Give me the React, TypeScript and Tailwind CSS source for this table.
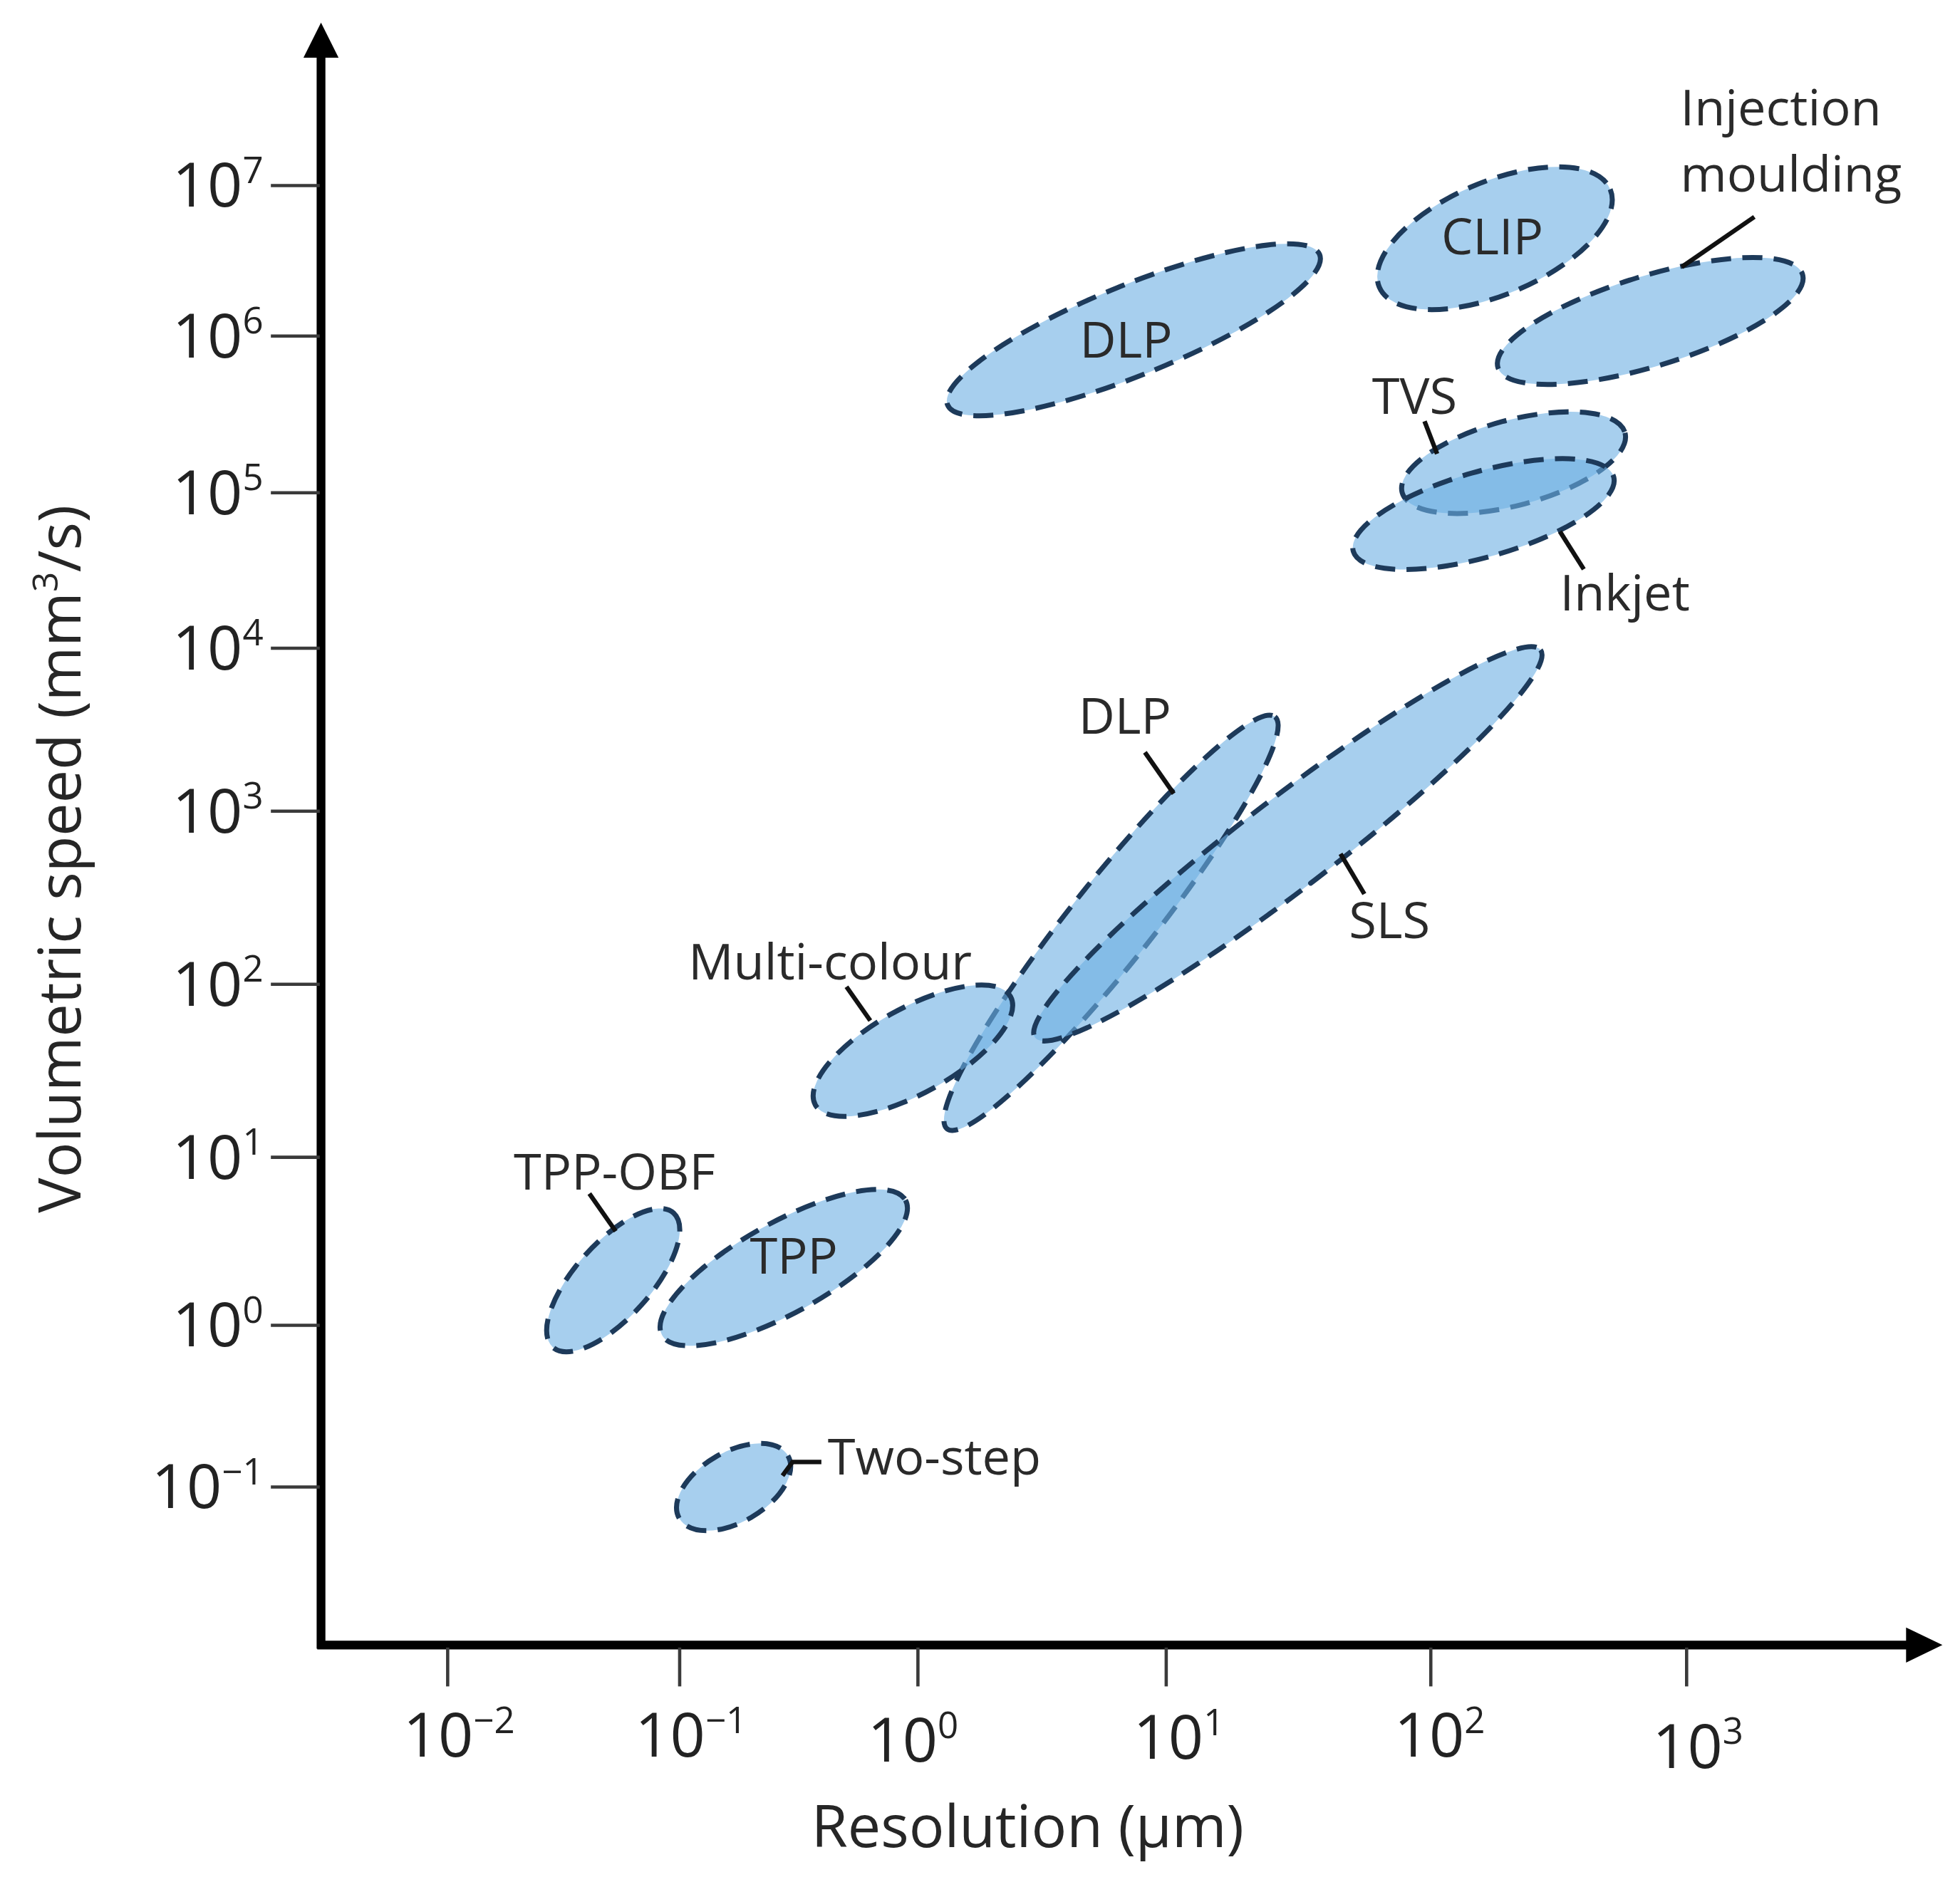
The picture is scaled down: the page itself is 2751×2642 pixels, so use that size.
import React from "react";

// chart drawn in the coordinates of a 1563x1501 frame, stretched to the page
type Blob = { cx: number; cy: number; rx: number; ry: number; rot: number };

const blobs: Blob[] = [
  { cx: 904, cy: 263, rx: 160, ry: 36, rot: -22 }, // DLP top
  { cx: 1192, cy: 190, rx: 100, ry: 45, rot: -23 }, // CLIP
  { cx: 1316, cy: 256, rx: 127, ry: 36, rot: -17 }, // injection moulding
  { cx: 1207, cy: 369, rx: 92, ry: 34, rot: -15 }, // TVS
  { cx: 1183, cy: 410, rx: 108, ry: 34, rot: -16 }, // inkjet
  { cx: 886, cy: 736, rx: 210, ry: 33, rot: -51.5 }, // DLP middle
  { cx: 1027, cy: 673, rx: 254, ry: 36, rot: -37.5 }, // SLS
  { cx: 728, cy: 838, rx: 89, ry: 34, rot: -29 }, // multi-colour
  { cx: 489, cy: 1021, rx: 72, ry: 30, rot: -48 }, // TPP-OBF
  { cx: 625, cy: 1011, rx: 111, ry: 36, rot: -29 }, // TPP
  { cx: 585, cy: 1186, rx: 50, ry: 28, rot: -30 }, // two-step
];

const labels = [
  { text: "DLP", x: 898, y: 285, anchor: "middle" },
  { text: "CLIP", x: 1190, y: 203, anchor: "middle" },
  { text: "Injection", x: 1340, y: 100, anchor: "start" },
  { text: "moulding", x: 1340, y: 153, anchor: "start" },
  { text: "TVS", x: 1128, y: 330, anchor: "middle" },
  { text: "Inkjet", x: 1244, y: 487, anchor: "start" },
  { text: "DLP", x: 897, y: 585, anchor: "middle" },
  { text: "SLS", x: 1108, y: 748, anchor: "middle" },
  { text: "Multi-colour", x: 662, y: 781, anchor: "middle" },
  { text: "TPP-OBF", x: 490, y: 949, anchor: "middle" },
  { text: "TPP", x: 633, y: 1016, anchor: "middle" },
  { text: "Two-step", x: 660, y: 1176, anchor: "start" },
];

const leaders = [
  "1341,213 1399,173",
  "1136,336 1146,362",
  "1244,424 1263,454",
  "913,600 936,633",
  "1069,681 1088,713",
  "675,787 694,814",
  "470,952 491,982",
  "624,1177 632,1166 655,1166",
];

const yTicks = [
  { y: 148, exp: "7" },
  { y: 268, exp: "6" },
  { y: 393, exp: "5" },
  { y: 517, exp: "4" },
  { y: 647, exp: "3" },
  { y: 785, exp: "2" },
  { y: 923, exp: "1" },
  { y: 1057, exp: "0" },
  { y: 1186, exp: "\u22121" },
];

const xTicks = [
  { x: 357, lx: 366, ly: 1401, exp: "\u22122" },
  { x: 542, lx: 551, ly: 1401, exp: "\u22121" },
  { x: 732, lx: 728, ly: 1405, exp: "0" },
  { x: 930, lx: 940, ly: 1403, exp: "1" },
  { x: 1141, lx: 1148, ly: 1401, exp: "2" },
  { x: 1345, lx: 1354, ly: 1410, exp: "3" },
];

const App = () => {
  return (
    <div className="w-[2751px] h-[2642px] bg-white overflow-hidden">
      <svg
        viewBox="0 0 1563 1501"
        preserveAspectRatio="none"
        className="block w-full h-full"
        fontFamily="'Open Sans', 'DejaVu Sans', sans-serif"
      >
        {/* regions */}
        <g>
          {blobs.map((b, i) => (
            <ellipse
              key={i}
              cx={b.cx}
              cy={b.cy}
              rx={b.rx}
              ry={b.ry}
              transform={`rotate(${b.rot} ${b.cx} ${b.cy})`}
              fill="#6cafe3"
              fillOpacity={0.6}
              stroke="#1d3a5a"
              strokeWidth={4}
              strokeDasharray="16 9"
            />
          ))}
        </g>

        {/* leader lines */}
        <g stroke="#111" strokeWidth={3.6} fill="none">
          {leaders.map((p, i) => (
            <polyline key={i} points={p} />
          ))}
        </g>

        {/* region labels */}
        <g fill="#2a2a2a" fontSize={40}>
          {labels.map((l, i) => (
            <text key={i} x={l.x} y={l.y} textAnchor={l.anchor as "start" | "middle"}>
              {l.text}
            </text>
          ))}
        </g>

        {/* axes */}
        <g stroke="#000" strokeWidth={7}>
          <line x1={256} y1={1315} x2={256} y2={40} />
          <line x1={253} y1={1312} x2={1524} y2={1312} />
        </g>
        <polygon points="256,18 242,46 270,46" fill="#000" />
        <polygon points="1549,1312 1520,1298 1520,1326" fill="#000" />

        {/* ticks */}
        <g stroke="#3a3a3a" strokeWidth={2.6}>
          {yTicks.map((t) => (
            <line key={t.exp} x1={216} y1={t.y} x2={255} y2={t.y} />
          ))}
          {xTicks.map((t) => (
            <line key={t.exp} x1={t.x} y1={1314} x2={t.x} y2={1345} />
          ))}
        </g>

        <g fill="#222" fontSize={49}>
          {yTicks.map((t) => (
            <text key={t.exp} x={210} y={t.y + 17} textAnchor="end">
              10
              <tspan fontSize={29} dy={-19}>
                {t.exp}
              </tspan>
            </text>
          ))}
          {xTicks.map((t) => (
            <text key={t.exp} x={t.lx} y={t.ly} textAnchor="middle">
              10
              <tspan fontSize={29} dy={-19}>
                {t.exp}
              </tspan>
            </text>
          ))}
        </g>

        {/* axis titles */}
        <g fill="#262626" fontSize={47}>
          <text x={647} y={1473}>
            Resolution (µm)
          </text>
          <text transform="translate(64 685) rotate(-90)" textAnchor="middle">
            Volumetric speed (mm
            <tspan fontSize={28} dy={-18}>
              3
            </tspan>
            <tspan dy={18}>/s)</tspan>
          </text>
        </g>
      </svg>
    </div>
  );
};

export default App;
